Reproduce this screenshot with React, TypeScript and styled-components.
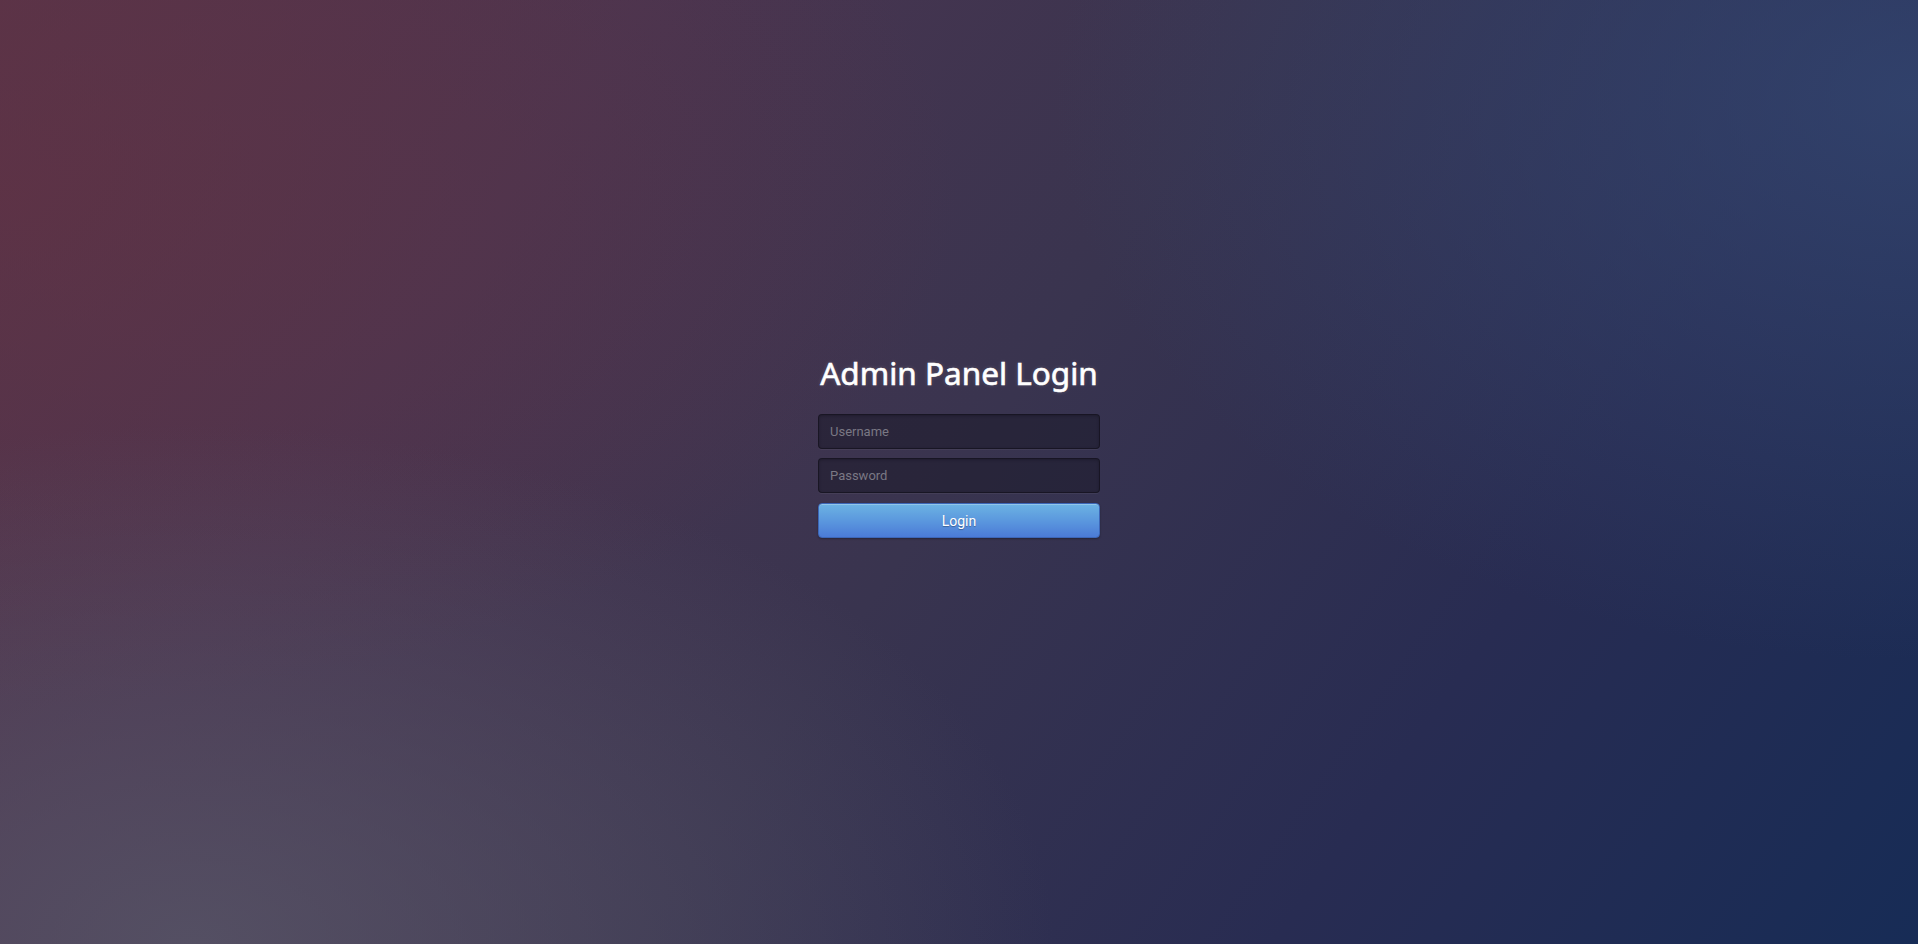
import React from "react";
import styled, { createGlobalStyle } from "styled-components";

const GlobalStyle = createGlobalStyle`
  html, body {
    margin: 0;
    padding: 0;
    height: 100%;
  }
  body {
    font-family: Roboto, "Liberation Sans", Arial, sans-serif;
    overflow: hidden;
  }
  #root { height: 100%; }
`;

const Page = styled.div`
  width: 100%;
  height: 100vh;
  display: flex;
  align-items: center;
  justify-content: center;
  background:
    radial-gradient(ellipse 45% 55% at 10% 100%, rgba(88, 86, 104, 0.8) 0%, rgba(88, 86, 104, 0) 100%),
    radial-gradient(ellipse 45% 60% at 100% 10%, rgba(52, 72, 115, 0.75) 0%, rgba(52, 72, 115, 0) 100%),
    radial-gradient(ellipse 50% 55% at 0% 20%, rgba(96, 50, 68, 0.7) 0%, rgba(96, 50, 68, 0) 100%),
    linear-gradient(125deg, #583449 0%, #4a3550 25%, #39344f 50%, #282c52 75%, #172c56 100%);
`;

const Form = styled.form`
  width: 282px;
  display: flex;
  flex-direction: column;
  align-items: stretch;
  margin-bottom: 53px;
`;

const Title = styled.h1`
  margin: 0 0 21px;
  text-align: center;
  font-family: "Noto Sans", "Open Sans", sans-serif;
  font-weight: 400;
  font-size: 31.5px;
  line-height: 40px;
  color: #ffffff;
  -webkit-text-stroke: 0.6px #ffffff;
  text-shadow: 0 0 4px rgba(255, 255, 255, 0.18);
  white-space: nowrap;
`;

const Input = styled.input`
  box-sizing: border-box;
  height: 35px;
  width: 100%;
  margin: 0 0 9px;
  padding: 0 11px;
  border: 1px solid rgba(20, 18, 30, 0.75);
  border-radius: 4px;
  background: rgba(28, 26, 42, 0.55);
  box-shadow: inset 0 1px 3px rgba(0, 0, 0, 0.25), 0 1px 0 rgba(255, 255, 255, 0.05);
  color: #ddd;
  font-family: Roboto, "Liberation Sans", Arial, sans-serif;
  font-size: 13px;
  outline: none;
  &::placeholder {
    color: #7a7884;
  }
`;

const Button = styled.button`
  box-sizing: border-box;
  height: 35px;
  width: 100%;
  margin-top: 1px;
  border: 1px solid #3c67b8;
  border-radius: 4px;
  background: linear-gradient(to bottom, #6cb3e3 0%, #5b98de 50%, #4b7bd7 100%);
  box-shadow: inset 0 1px 0 rgba(255, 255, 255, 0.25), 0 1px 2px rgba(0, 0, 0, 0.3);
  color: #ffffff;
  font-family: Roboto, "Liberation Sans", Arial, sans-serif;
  font-size: 14px;
  text-shadow: 0 1px 1px rgba(0, 0, 0, 0.3);
  cursor: pointer;
`;

export default function App() {
  return (
    <>
      <GlobalStyle />
      <Page>
        <Form onSubmit={(e) => e.preventDefault()}>
          <Title>Admin Panel Login</Title>
          <Input type="text" placeholder="Username" />
          <Input type="password" placeholder="Password" />
          <Button type="submit">Login</Button>
        </Form>
      </Page>
    </>
  );
}
